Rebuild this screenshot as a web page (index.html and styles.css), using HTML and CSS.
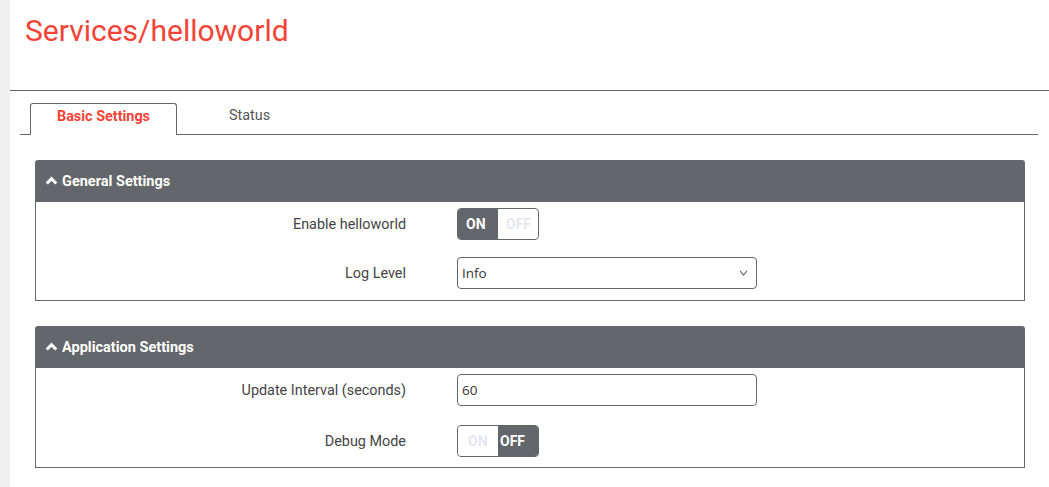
FILE: index.html
```html
<!DOCTYPE html>
<html>
<head>
<meta charset="utf-8">
<link rel="stylesheet" href="styles.css">
</head>
<body>
<div class="strip"></div>
<main class="main">
  <header class="page-head">
    <h1 class="title">Services/helloworld</h1>
  </header>
  <nav class="tabs">
    <div class="tab active">Basic Settings</div>
    <div class="tab">Status</div>
  </nav>
  <section class="panel">
    <div class="panel-head">
      <svg class="chev" viewBox="0 0 12 8" width="13" height="9"><path d="M1.6 6.8 L6 2.4 L10.4 6.8" fill="none" stroke="#fff" stroke-width="2.8"/></svg>
      <span>General Settings</span>
    </div>
    <div class="panel-body first">
      <div class="row">
        <label class="lbl">Enable helloworld</label>
        <div class="toggle on"><span class="t-on">ON</span><span class="t-off">OFF</span></div>
      </div>
      <div class="row">
        <label class="lbl">Log Level</label>
        <div class="field select">Info
          <svg class="arrow" viewBox="0 0 10 7" width="9" height="6"><path d="M1 1 L5 6 L9 1" fill="none" stroke="#666" stroke-width="1.2"/></svg>
        </div>
      </div>
    </div>
  </section>
  <section class="panel">
    <div class="panel-head">
      <svg class="chev" viewBox="0 0 12 8" width="13" height="9"><path d="M1.6 6.8 L6 2.4 L10.4 6.8" fill="none" stroke="#fff" stroke-width="2.8"/></svg>
      <span>Application Settings</span>
    </div>
    <div class="panel-body second">
      <div class="row">
        <label class="lbl">Update Interval (seconds)</label>
        <div class="field">60</div>
      </div>
      <div class="row">
        <label class="lbl">Debug Mode</label>
        <div class="toggle off"><span class="t-on">ON</span><span class="t-off">OFF</span></div>
      </div>
    </div>
  </section>
</main>
</body>
</html>
```

FILE: styles.css
```css
* { box-sizing: border-box; }
html, body { margin: 0; padding: 0; height: 100%; }
body {
  display: flex;
  background: #fff;
  font-family: Roboto, "Liberation Sans", sans-serif;
  overflow: hidden;
}
.strip { width: 10px; flex: none; background: #f0f0f0; }
.main { flex: 1; min-width: 0; }
.page-head {
  height: 91px;
  border-bottom: 1px solid #666;
  padding: 12px 0 0 15px;
}
.title {
  margin: 0;
  font-weight: 400;
  font-size: 30px;
  line-height: 37px;
  color: #f44336;
}
.tabs {
  display: flex;
  margin: 12px 11px 0 10px;
  padding-left: 10px;
  border-bottom: 1px solid #666;
  height: 32px;
}
.tab {
  width: 147px;
  height: 32px;
  text-align: center;
  font-size: 14.4px;
  line-height: 25px;
  color: #555;
}
.tab + .tab { width: 145px; }
.tab.active {
  border: 1px solid #666;
  border-bottom: none;
  border-radius: 3px 3px 0 0;
  background: #fff;
  color: #f44336;
  font-weight: 700;
  margin-bottom: -1px;
  height: 32px;
}
.panel {
  margin: 25px 24px 0 25px;
}
.panel + .panel { margin-top: 25px; }
.panel-head {
  height: 42px;
  background: #63666a;
  border-radius: 3px 3px 0 0;
  color: #fff;
  font-weight: 700;
  font-size: 14.5px;
  display: flex;
  align-items: center;
  padding-left: 10px;
  gap: 4px;
}
.chev { display: block; margin-top: -1px; }
.panel-body {
  border: 1px solid #63666a;
  border-top: none;
  display: flex;
  flex-direction: column;
}
.panel-body.first { padding: 6px 0 11px; gap: 17px; }
.panel-body.second { padding: 6px 0 10px; gap: 19px; }
.row {
  display: flex;
  align-items: center;
  height: 32px;
}
.lbl {
  width: 370px;
  text-align: right;
  font-size: 14.4px;
  color: #444;
  margin-right: 51px;
}
.field {
  width: 300px;
  height: 32px;
  border: 1px solid #63666a;
  border-radius: 4px;
  font-family: "Open Sans", "DejaVu Sans", sans-serif;
  font-size: 13.5px;
  color: #333;
  padding: 0 4px;
  display: flex;
  align-items: center;
}
.select { justify-content: space-between; padding-right: 8px; }
.arrow { display: block; }
.toggle {
  width: 82px;
  height: 32px;
  border: 1px solid #63666a;
  border-radius: 4px;
  display: flex;
  overflow: hidden;
  font-size: 14px;
  font-weight: 700;
}
.toggle span {
  width: 40px;
  display: flex;
  align-items: center;
  padding-left: 8px;
}
.toggle.on .t-on { background: #63666a; color: #fff; }
.toggle.on .t-off { background: #fff; color: #e6e6f0; border-radius: 4px; }
.toggle.off .t-on { background: #fff; color: #e6e6f0; border-radius: 4px; padding-left: 10px; }
.toggle.off .t-off { background: #63666a; color: #fff; padding-left: 2px; }
```
